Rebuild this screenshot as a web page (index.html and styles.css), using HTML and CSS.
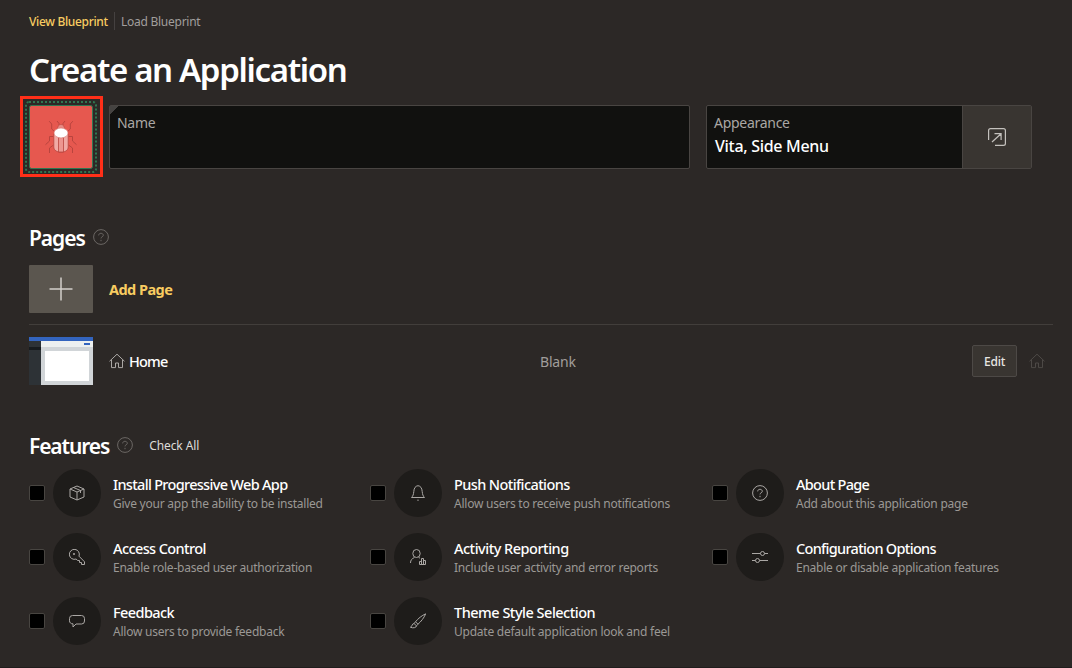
FILE: index.html
```html
<!DOCTYPE html>
<html lang="en">
<head>
<meta charset="utf-8">
<title>Create an Application</title>
<link rel="stylesheet" href="styles.css">
</head>
<body>
<svg class="defs" width="0" height="0">
  <symbol id="help" viewBox="0 0 16 16"><circle cx="8" cy="8" r="7.4"/><path d="M5.700 6.400C5.700 4.900 6.800 4.300 8 4.300s2.300.8 2.300 2c0 1.500-2.300 1.500-2.300 3.100M8 10.800v1.400"/></symbol>
  <symbol id="home" viewBox="0 0 16 16"><path d="M.5 8.300 8 1.200l7.500 7.100M2.500 6.600v8h4v-4.600h3v4.600h4v-8"/></symbol>
</svg>
<main class="page">
  <nav class="tabs"><a class="tab tab-active">View Blueprint</a><a class="tab tab-load">Load Blueprint</a></nav>
  <h1 class="title">Create an Application</h1>
  <section class="fields">
    <div class="icon-frame">
      <svg class="app-icon" viewBox="0 0 83 81">
        <rect x="1.500" y="1.500" width="80" height="78" fill="none" stroke="#ff2f18" stroke-width="3"/>
        <rect x="6" y="6" width="70" height="70" rx="3" fill="none" stroke="#2f7650" stroke-width="2" stroke-dasharray="2 2"/>
        <rect x="9.500" y="9.500" width="63" height="63" rx="2" fill="#e6584f" stroke="#2f7650"/>
        <path fill="none" stroke="#b9443e" d="M39 29.500v-2l-2-2.500M43 29.500v-2l2-2.500M35 36l-3.300-3v-5l-2.500-2.800M47 36l3.300-3v-5l2.500-2.800M33.500 40.500h-4v4.500l-4 3.700M48.500 40.500h4v4.500l4 3.700M33.500 49l-4 3v5M48.500 49l4 3v5"/>
        <path d="M37.500 32.500c0-2 1.500-4 3.500-4s3.500 2 3.500 4z" fill="#e98b84" stroke="#b9443e" stroke-width=".6"/>
        <path d="M33.800 38h14.400v13c0 3.500-3.500 5.200-7.200 5.200s-7.200-1.700-7.200-5.200z" fill="#f1aaa5" stroke="#b9443e" stroke-width=".8"/>
        <path d="M38.500 41.500h5V56h-5z" fill="#ed9690" stroke="#b9443e" stroke-width=".8"/>
        <ellipse cx="41" cy="37" rx="7" ry="4.900" fill="#fff" stroke="#d3645c" stroke-width=".5"/>
      </svg>
    </div>
    <div class="field name"><span class="label">Name</span></div>
    <div class="field appearance"><div class="appearance-text"><span class="label">Appearance</span><span class="value">Vita, Side Menu</span></div>
      <button class="open"><svg class="ico18" viewBox="0 0 18 18"><path d="M.6 12V2.500A1.900 1.900 0 0 1 2.500.6h13a1.900 1.900 0 0 1 1.900 1.900v13a1.900 1.900 0 0 1-1.900 1.900H7M4 14l8.800-8M6.500 5.600h6.600V12"/></svg></button>
    </div>
  </section>
  <section class="pages">
    <h2 class="heading"><span class="heading-text">Pages</span><svg class="ico16 dim"><use href="#help"/></svg></h2>
    <div class="add-row"><div class="add"><svg class="plus" viewBox="0 0 24 24"><path d="M12 .5v23M.5 12h23"/></svg></div><span class="add-label">Add Page</span></div>
    <div class="page-row">
      <svg class="thumb" viewBox="0 0 64 48"><path fill="#d1d5d8" d="M0 0h64v48H0z"/><path fill="#2d3236" d="M0 4h12v44H0z"/><path fill="#171b1e" d="M0 10h12v3H0z"/><path fill="#edf0f0" d="M12 4h52v6H12z"/><path fill="#3364be" d="M0 0h64v4H0zM55 6h6v2h-6z"/><path fill="#fff" d="M16 14h44v30H16z"/></svg>
      <div class="page-name"><svg class="ico16"><use href="#home"/></svg><span>Home</span></div>
      <span class="blank">Blank</span><button class="edit">Edit</button><svg class="ico16 faint"><use href="#home"/></svg>
    </div>
  </section>
  <section class="features">
    <h2 class="heading"><span class="heading-text">Features</span><svg class="ico16 dim"><use href="#help"/></svg><a class="check-all">Check All</a></h2>
    <div class="grid">
      <div class="feature"><i class="box"></i><div class="disc"><svg class="ico16" viewBox="0 0 16 16"><path d="M8 1l7 3v8l-7 3-7-3V4zM1 4l7 3 7-3M8 7v8M4.500 2.500l7 3V8"/></svg></div><div class="copy"><b>Install Progressive Web App</b><small>Give your app the ability to be installed</small></div></div>
      <div class="feature"><i class="box"></i><div class="disc"><svg class="ico16" viewBox="0 0 16 16"><path d="M1.500 12.500c1.500-1.500 2-3 2.300-6C4 3 5.500 1 8 .7c2.500.3 4 2.300 4.200 5.800.3 3 .8 4.500 2.300 6zM7.300 15.200h1.400"/></svg></div><div class="copy"><b>Push Notifications</b><small>Allow users to receive push notifications</small></div></div>
      <div class="feature"><i class="box"></i><div class="disc"><svg class="ico16"><use href="#help"/></svg></div><div class="copy"><b>About Page</b><small>Add about this application page</small></div></div>
      <div class="feature"><i class="box"></i><div class="disc"><svg class="ico16" viewBox="0 0 16 16"><path d="M10 7.200l5.500 5.600v2.700h-3V13.500h-2V11.500H8.500L7.200 10A5 5 0 1 1 10 7.200zM4.500 4.500h1v1h-1z"/></svg></div><div class="copy"><b>Access Control</b><small>Enable role-based user authorization</small></div></div>
      <div class="feature"><i class="box"></i><div class="disc"><svg class="ico16" viewBox="0 0 16 16"><ellipse cx="6.500" cy="4.500" rx="3.700" ry="4"/><path d="M.5 14c0-3 1.500-4.500 4-5.500M8.500 8.200l1.500 1M9.500 15.500v-3h2v3h2v-6h-2v6M13.500 11.500h2v4h-6"/></svg></div><div class="copy"><b>Activity Reporting</b><small>Include user activity and error reports</small></div></div>
      <div class="feature"><i class="box"></i><div class="disc"><svg class="ico16" viewBox="0 0 16 16"><path d="M0 4.500h8.500M12.500 4.500H16M0 11.500h3.500M7.500 11.500H16"/><circle cx="10.500" cy="4.500" r="2"/><circle cx="5.500" cy="11.500" r="2"/></svg></div><div class="copy"><b>Configuration Options</b><small>Enable or disable application features</small></div></div>
      <div class="feature"><i class="box"></i><div class="disc"><svg class="ico16" viewBox="0 0 16 16"><path d="M3.500 2.500h9a3 3 0 0 1 3 3v2.500a3 3 0 0 1-3 3H7l-3 3v-3.200a3 3 0 0 1-3.500-3V5.500a3 3 0 0 1 3-3z"/></svg></div><div class="copy"><b>Feedback</b><small>Allow users to provide feedback</small></div></div>
      <div class="feature"><i class="box"></i><div class="disc"><svg class="ico16" viewBox="0 0 16 16"><path d="M15.700.8C12 2.500 8 5.500 5.500 8.800L4 10.500 6.500 12.800 8 11.200C11 8.500 14 5 15.700.8zM4 10.500c-2.200.2-1.500 3-3.600 3.700 2.500 1.200 6 .6 6.100-1.400M5.500 8.800L8 11.200"/></svg></div><div class="copy"><b>Theme Style Selection</b><small>Update default application look and feel</small></div></div>
    </div>
  </section>
</main>
</body>
</html>
```

FILE: styles.css
```css
* { box-sizing: border-box; }
body { margin: 0; background: #2c2826; color: #fff; font-family: "Noto Sans", "Open Sans", sans-serif; overflow: hidden; }
svg { display: block; flex: none; }
.defs { position: absolute; }
.page { height: 668px; padding: 12px 19px 0 29px; border-bottom: 1px solid #201d1c; white-space: nowrap; }
.tabs { display: flex; height: 18px; font-size: 12px; line-height: 19px; letter-spacing: -.26px; }
.tab-active { color: #f8cc61; font-weight: 500; letter-spacing: -.33px; width: 86px; border-right: 1px solid #454140; }
.tab-load { color: #a19e9c; padding-left: 6px; }
.title { margin: 15px 0 1px; height: 50px; line-height: 50px; font-size: 33px; font-weight: 600; letter-spacing: -1.35px; }
.fields { display: flex; height: 81px; margin-left: -9px; }
.icon-frame, .app-icon { width: 83px; height: 81px; }
.field { height: 64px; margin-top: 9px; background: #11110f; border: 1px solid #494542; border-radius: 2px; }
.name { width: 581px; margin-left: 6px; padding: 7px; background: linear-gradient(135deg, #454341 6px, #11110f 6px); }
.label { display: block; font-size: 14px; line-height: 20px; letter-spacing: -.28px; color: #aaa7a4; }
.appearance { width: 326px; margin-left: 16px; display: flex; }
.appearance-text { flex: 1; padding: 7px; }
.value { display: block; padding-left: 1px; font-size: 16px; line-height: 27px; font-weight: 500; letter-spacing: -.3px; }
.open { width: 69px; border: 0; border-left: 1px solid #494542; background: #393531; padding: 0; display: flex; align-items: center; justify-content: center; }
.ico16, .ico18, .plus { fill: none; stroke: #aaa7a4; stroke-width: 1; }
.ico16 { width: 16px; height: 16px; }
.ico18 { width: 18px; height: 18px; stroke: #c4c1bd; stroke-width: 1.2; }
.plus { width: 24px; height: 24px; stroke: #d3d0cb; stroke-width: 1.5; }
.ico16.dim { stroke: #6b6764; }
.ico16.faint { stroke: #4d4946; margin-left: 12px; }
.pages { margin-top: 46px; }
.heading { display: flex; align-items: center; gap: 8px; margin: 0; height: 28px; font-size: 21px; line-height: 28px; font-weight: 600; }
.heading-text { padding-top: 1px; letter-spacing: -1.050px; }
.add-row { display: flex; align-items: center; height: 60px; margin-top: 14px; padding-bottom: 11px; border-bottom: 1px solid #423e3b; }
.add { width: 64px; height: 48px; background: #5b564f; display: flex; align-items: center; justify-content: center; border-radius: 1px; }
.add-label { margin-left: 16px; color: #f8cc61; font-size: 14.500px; font-weight: 700; letter-spacing: -.55px; }
.page-row { display: flex; align-items: center; height: 72px; padding-right: 8px; }
.thumb { width: 64px; height: 48px; }
.page-name { display: flex; gap: 4px; align-items: center; width: 431px; margin-left: 16px; font-size: 14.500px; font-weight: 500; letter-spacing: -.85px; }
.blank { width: 432px; font-size: 14px; letter-spacing: -.2px; color: #a19e9b; }
.edit { width: 45px; height: 32px; padding: 0; color: #e7e5e2; background: #393531; border: 1px solid #4d4946; border-radius: 2px; font: 500 12px "Noto Sans", sans-serif; letter-spacing: -.2px; }
.features { margin-top: 34px; }
.features .heading-text { letter-spacing: -1.120px; }
.check-all { margin-left: 8px; padding-top: 1px; font-size: 12px; font-weight: 400; letter-spacing: -.1px; color: #dedcd9; }
.grid { display: grid; grid-template-columns: 341px 342px 320px; grid-auto-rows: 48px; row-gap: 16px; margin-top: 10px; }
.feature { display: flex; align-items: center; }
.box { width: 16px; height: 16px; background: #000; border: 1px solid #484541; border-radius: 2px; }
.disc { width: 48px; height: 48px; margin-left: 8px; border-radius: 50%; background: #1e1c1a; display: flex; align-items: center; justify-content: center; }
.copy { height: 38px; margin: 2px 0 0 12px; }
.copy b { display: block; height: 20px; font-size: 14.500px; line-height: 19px; font-weight: 500; letter-spacing: -.6px; }
.feature:nth-child(1) b { letter-spacing: -.69px; }
.feature:nth-child(3) b, .feature:nth-child(6) b { letter-spacing: -.7px; }
.feature:nth-child(5) b, .feature:nth-child(8) b { letter-spacing: -.5px; }
.copy small { display: block; font-size: 12px; line-height: 18px; letter-spacing: -.24px; color: #9b9895; }
```
